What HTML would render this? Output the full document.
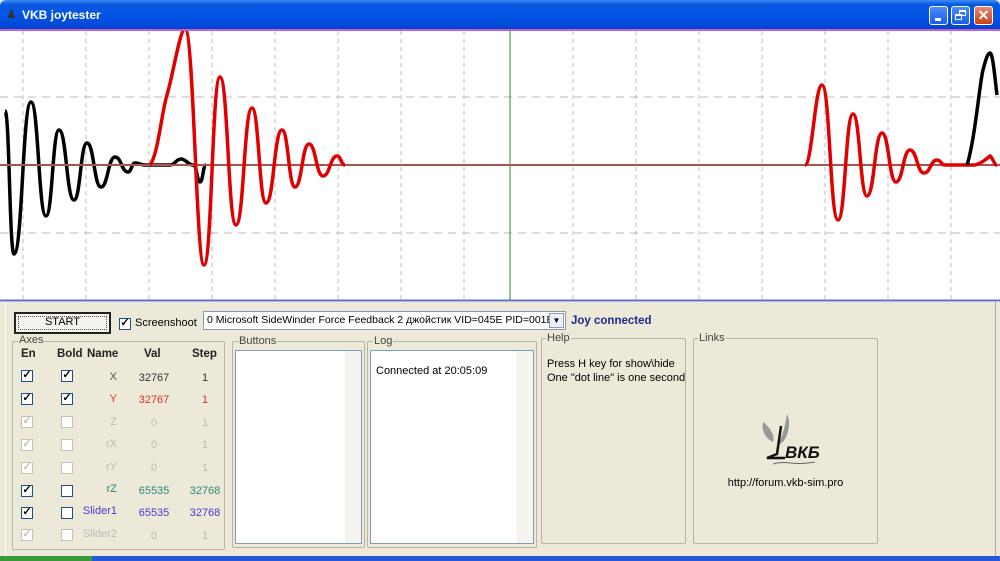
<!DOCTYPE html>
<html><head><meta charset="utf-8"><style>
*{margin:0;padding:0;box-sizing:border-box}
body{width:1000px;height:561px;overflow:hidden;background:#ece9d8;font-family:"Liberation Sans",sans-serif;font-size:11px;position:relative}
.a{position:absolute;white-space:nowrap}
.tb{left:0;top:0;width:1000px;height:30px;background:linear-gradient(#3d8df5 0%,#0858e0 15%,#0355e6 50%,#0249d8 85%,#0a3fc0 100%);border-radius:6px 6px 0 0}
.tt{left:22px;top:8px;color:#fff;font-weight:bold;font-size:12px}
.wb{top:6px;width:19px;height:19px;border:1px solid #fff;border-radius:3px;background:linear-gradient(#4a8cf8,#1a5ee8)}
.grp{border:1px solid #b8b4a4;border-radius:2px}
.gt{background:#ece9d8;color:#444;padding:0 1px}
.lb{background:#fff;border:1px solid #7f9db9}
.sb{background:#f4f3ee;border-left:1px solid #eee}
.cb{width:12px;height:12px;border:1px solid #1c5180;background:#fff;font-size:11px;line-height:9px;text-align:center;font-weight:bold;color:#000}
.cb.d{border-color:#c5c2b2;color:#c5c2b2}
.h{font-weight:bold;color:#222;font-size:11.5px}
</style></head><body>
<div class="a tb"></div>
<div class="a" style="left:6px;top:7px;width:12px;height:16px;color:#333;font-size:12px">&#9823;</div>
<div class="a tt">VKB joytester</div>
<div class="a wb" style="left:929px"><div class="a" style="left:5px;top:11px;width:6px;height:3px;background:#fff"></div></div>
<div class="a wb" style="left:951px"><div class="a" style="left:7px;top:3px;width:7px;height:6px;border:1px solid #fff;border-top-width:2px"></div><div class="a" style="left:3px;top:7px;width:7px;height:6px;border:1px solid #fff;border-top-width:2px;background:#2a6cf0"></div></div>
<div class="a wb" style="left:974px;background:linear-gradient(#e88a70,#c8401c);color:#fff;font-weight:bold;font-size:14px;text-align:center;line-height:17px">✕</div>
<div class="a" style="left:0;top:29px;width:1000px;height:2px;background:#c060d0"></div>
<svg class="a" style="left:0;top:31px" width="1000" height="271" viewBox="0 31 1000 271">
<rect x="0" y="31" width="1000" height="271" fill="#fff"/>
<g stroke="#bbb" stroke-width="1" stroke-dasharray="4,4">
<path d="M23,31V300M86,31V300M149,31V300M212,31V300M275,31V300M338,31V300M401,31V300M464,31V300M573,31V300M636,31V300M699,31V300M762,31V300M825,31V300M888,31V300M951,31V300"/>
<path d="M0,97H1000M0,233H1000" stroke-dasharray="8,6"/>
</g>
<path d="M510,31V300" stroke="#2a8a2a" stroke-width="1"/>
<path d="M0,165H1000" stroke="#000" stroke-width="2"/>
<path d="M5,111 C9.5,111 9.5,254 14,254 C22.5,254 22.5,102 31,102 C38.5,102 38.5,216 46,216 C52.5,216 52.5,130 59,130 C66.5,130 66.5,200 74,200 C80.5,200 80.5,143 87,143 C94,143 94,187 101,187 C108,187 108,157 115,157 C121.5,157 121.5,172 128,172 C131.5,172 131.5,163 135,163 C140,163 140,165 145,165 L170,165 C175,165 176,159 181,159 C186,159 188,165 193,165 C197,165 197,182 200,182 C203,182 203,165 206,165" fill="none" stroke="#000" stroke-width="3.5"/>
<path d="M0,165H1000" stroke="#e07070" stroke-width="1.5"/>
<path d="M150,165 C158,155 162,110 167,95 C173,75 180,29 185,29 C194,29 196,265 204,265 C212,265 212,77 220,77 C228,77 228,225 236,225 C244,225 244,108 252,108 C259,108 259,203 266,203 C274,203 274,130 282,130 C288.5,130 288.5,187 295,187 C302,187 302,144 309,144 C316,144 316,176 323,176 C330,176 330,156 337,156 C341,156 341,165 345,165" fill="none" stroke="#e00000" stroke-width="3.5"/>
<path d="M805,165 C812,165 815,85 822,85 C830,85 830,220 838,220 C845.5,220 845.5,114 853,114 C860,114 860,196 867,196 C874.5,196 874.5,133 882,133 C889,133 889,182 896,182 C903,182 903,150 910,150 C917,150 917,173 924,173 C930.5,173 930.5,160 937,160 C941,160 941,165 945,165 L975,165 C982,163 985,160 990,156 C993,158 994,165 997,165" fill="none" stroke="#e00000" stroke-width="3.5"/>
<path d="M967,165 C975,140 980,80 983,70 C986,58 988,53 990,53 C993,53 995,80 997,95" fill="none" stroke="#000" stroke-width="3.5"/>
<path d="M0,300.5H1000" stroke="#6070c0" stroke-width="2"/>
</svg>
<div class="a" style="left:5px;top:302px;width:991px;height:254px;border-left:1px solid #fff;border-right:1px solid #aaa"></div>
<div class="a" style="left:0;top:556px;width:1000px;height:5px;background:#2458d8"></div>
<div class="a" style="left:0;top:556px;width:92px;height:5px;background:#3a9a3a"></div>
<div class="a" style="left:14px;top:312px;width:97px;height:22px;border:2px solid #222;background:#f4f3ee;text-align:center;line-height:17px;font-size:11px"><div class="a" style="left:2px;top:2px;right:2px;bottom:2px;border:1px dotted #555"></div>START</div>
<div class="a cb" style="left:119px;top:318px">✓</div>
<div class="a" style="left:135px;top:317px">Screenshoot</div>
<div class="a" style="left:203px;top:311px;width:363px;height:19px;background:#fff;border:1px solid #7f9db9;padding:2px 0 0 3px;overflow:hidden;font-size:10.5px">0 Microsoft SideWinder Force Feedback 2 джойстик VID=045E PID=001E</div>
<div class="a" style="left:549px;top:313px;width:15px;height:15px;background:#e8eefc;border:1px solid #999;font-size:8px;text-align:center;line-height:13px">▼</div>
<div class="a" style="left:571px;top:315px;color:#1c2a8a;font-weight:bold;font-size:11.5px">Joy connected</div>

<div class="a grp" style="left:12px;top:341px;width:213px;height:209px"></div>
<div class="a gt" style="left:18px;top:334px">Axes</div>
<div class="a h" style="left:21px;top:348px">En</div>
<div class="a h" style="left:57px;top:348px">Bold</div>
<div class="a h" style="left:87px;top:348px">Name</div>
<div class="a h" style="left:144px;top:348px">Val</div>
<div class="a h" style="left:192px;top:348px">Step</div>

<div class="a cb" style="left:21px;top:370px">✓</div><div class="a cb" style="left:61px;top:370px">✓</div>
<div class="a" style="left:70px;top:371px;width:47px;text-align:right;color:#555">X</div><div class="a" style="left:130px;top:372px;width:48px;text-align:center;color:#333">32767</div><div class="a" style="left:185px;top:372px;width:40px;text-align:center;color:#333">1</div>
<div class="a cb" style="left:21px;top:393px">✓</div><div class="a cb" style="left:61px;top:393px">✓</div>
<div class="a" style="left:70px;top:393px;width:47px;text-align:right;color:#e03030">Y</div><div class="a" style="left:130px;top:394px;width:48px;text-align:center;color:#e03030">32767</div><div class="a" style="left:185px;top:394px;width:40px;text-align:center;color:#e03030">1</div>
<div class="a cb d" style="left:21px;top:416px">✓</div><div class="a cb d" style="left:61px;top:416px"></div>
<div class="a" style="left:70px;top:416px;width:47px;text-align:right;color:#bbb">Z</div><div class="a" style="left:130px;top:417px;width:48px;text-align:center;color:#bbb">0</div><div class="a" style="left:185px;top:417px;width:40px;text-align:center;color:#bbb">1</div>
<div class="a cb d" style="left:21px;top:439px">✓</div><div class="a cb d" style="left:61px;top:439px"></div>
<div class="a" style="left:70px;top:438px;width:47px;text-align:right;color:#bbb">rX</div><div class="a" style="left:130px;top:439px;width:48px;text-align:center;color:#bbb">0</div><div class="a" style="left:185px;top:439px;width:40px;text-align:center;color:#bbb">1</div>
<div class="a cb d" style="left:21px;top:462px">✓</div><div class="a cb d" style="left:61px;top:462px"></div>
<div class="a" style="left:70px;top:461px;width:47px;text-align:right;color:#bbb">rY</div><div class="a" style="left:130px;top:462px;width:48px;text-align:center;color:#bbb">0</div><div class="a" style="left:185px;top:462px;width:40px;text-align:center;color:#bbb">1</div>
<div class="a cb" style="left:21px;top:485px">✓</div><div class="a cb" style="left:61px;top:485px"></div>
<div class="a" style="left:70px;top:483px;width:47px;text-align:right;color:#2a8a7a">rZ</div><div class="a" style="left:130px;top:485px;width:48px;text-align:center;color:#2a8a7a">65535</div><div class="a" style="left:185px;top:485px;width:40px;text-align:center;color:#2a8a7a">32768</div>
<div class="a cb" style="left:21px;top:507px">✓</div><div class="a cb" style="left:61px;top:507px"></div>
<div class="a" style="left:70px;top:505px;width:47px;text-align:right;color:#4a3ad0">Slider1</div><div class="a" style="left:130px;top:507px;width:48px;text-align:center;color:#4a3ad0">65535</div><div class="a" style="left:185px;top:507px;width:40px;text-align:center;color:#4a3ad0">32768</div>
<div class="a cb d" style="left:21px;top:529px">✓</div><div class="a cb d" style="left:61px;top:529px"></div>
<div class="a" style="left:70px;top:528px;width:47px;text-align:right;color:#bbb">Slider2</div><div class="a" style="left:130px;top:530px;width:48px;text-align:center;color:#bbb">0</div><div class="a" style="left:185px;top:530px;width:40px;text-align:center;color:#bbb">1</div>

<div class="a grp" style="left:232px;top:341px;width:133px;height:207px"></div>
<div class="a gt" style="left:238px;top:335px">Buttons</div>
<div class="a lb" style="left:235px;top:350px;width:127px;height:194px"><div class="a sb" style="right:0;top:0;width:16px;height:192px"></div></div>
<div class="a grp" style="left:367px;top:341px;width:170px;height:207px"></div>
<div class="a gt" style="left:373px;top:335px">Log</div>
<div class="a lb" style="left:370px;top:350px;width:164px;height:194px"><div class="a sb" style="right:0;top:0;width:16px;height:192px"></div></div>
<div class="a" style="left:376px;top:365px">Connected at 20:05:09</div>
<div class="a grp" style="left:541px;top:338px;width:145px;height:206px"></div>
<div class="a gt" style="left:546px;top:332px">Help</div>
<div class="a" style="left:547px;top:357px;line-height:14px">Press H key for show\hide<br>One "dot line" is one second</div>
<div class="a grp" style="left:693px;top:338px;width:185px;height:206px"></div>
<div class="a gt" style="left:698px;top:332px">Links</div>
<svg class="a" style="left:755px;top:412px" width="70" height="58">
<path d="M8,10 C6,18 10,26 18,30 C20,24 16,16 8,10Z M32,2 C36,10 34,22 28,30 L22,34 C28,24 30,14 32,2Z" fill="#999"/>
<path d="M26,14 L22,42 L12,46 L30,46" fill="none" stroke="#111" stroke-width="2.5"/>
<text x="30" y="46" font-family="Liberation Sans,sans-serif" font-weight="bold" font-style="italic" font-size="17" fill="#111">ВКБ</text>
<path d="M18,52 C30,48 40,54 60,50" fill="none" stroke="#666" stroke-width="1"/>
</svg>
<div class="a" style="left:693px;top:477px;width:185px;text-align:center">http://forum.vkb-sim.pro</div>
</body></html>
